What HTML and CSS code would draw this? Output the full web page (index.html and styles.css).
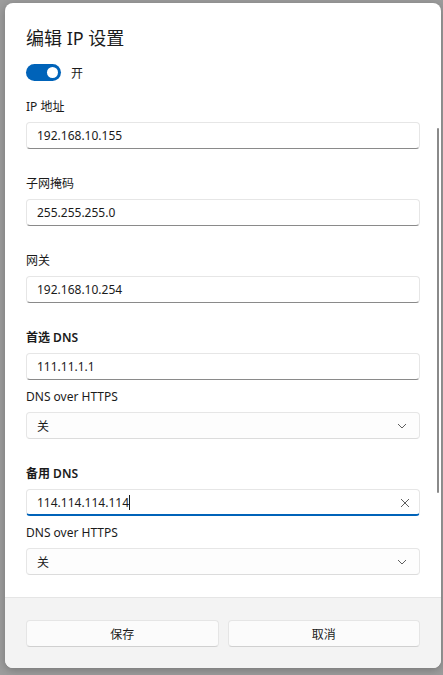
FILE: index.html
```html
<!DOCTYPE html>
<html lang="zh-CN">
<head>
  <meta charset="UTF-8" />
  <title>编辑 IP 设置</title>
  <link rel="stylesheet" href="styles.css">
</head>
<body>
  <div class="overlay">
    <div class="dialog">
      <div class="dialog-body">
        <h2>编辑 IP 设置</h2>

        <div class="toggle-row">
          <span class="toggle"><span class="thumb"></span></span>
          <span>开</span>
        </div>

        <div class="form-group">
          <label>IP 地址</label>
          <div class="field">192.168.10.155</div>
        </div>
        <div class="form-group">
          <label>子网掩码</label>
          <div class="field">255.255.255.0</div>
        </div>
        <div class="form-group">
          <label>网关</label>
          <div class="field">192.168.10.254</div>
        </div>
        <div class="form-group">
          <label class="strong">首选 DNS</label>
          <div class="field">111.11.1.1</div>
          <label class="sub">DNS over HTTPS</label>
          <div class="field select">
            <span>关</span>
            <svg width="10" height="6" viewBox="0 0 10 6"><polyline points="1,1 5,5 9,1" fill="none" stroke="#5f5f5f" stroke-width="1"/></svg>
          </div>
        </div>
        <div class="form-group">
          <label class="strong">备用 DNS</label>
          <div class="field focused">
            <span>114.114.114.114<span class="caret"></span></span>
            <svg width="10" height="10" viewBox="0 0 10 10"><path d="M1 1 L9 9 M9 1 L1 9" stroke="#5f5f5f" stroke-width="1"/></svg>
          </div>
          <label class="sub">DNS over HTTPS</label>
          <div class="field select">
            <span>关</span>
            <svg width="10" height="6" viewBox="0 0 10 6"><polyline points="1,1 5,5 9,1" fill="none" stroke="#5f5f5f" stroke-width="1"/></svg>
          </div>
        </div>
      </div>

      <div class="scroll-thumb"></div>

      <div class="dialog-footer">
        <button class="btn">保存</button>
        <button class="btn">取消</button>
      </div>
    </div>
  </div>
</body>
</html>
```

FILE: styles.css
```css
body {
  margin: 0;
  font-family: "Noto Sans", "Noto Sans CJK SC", sans-serif;
  font-size: 12px;
  color: #1b1b1b;
  background: #9d9d9d;
}
.overlay {
  padding: 3px 2px 7px 5px;
}
.dialog {
  position: relative;
  width: 436px;
  height: 665px;
  background: white;
  border-radius: 8px;
  box-shadow: 0 2px 10px rgba(0, 0, 0, 0.25);
  display: flex;
  flex-direction: column;
  overflow: hidden;
}
.dialog-body {
  flex: 1;
  overflow: hidden;
  padding: 23px 21px 0 21px;
}
h2 {
  margin: 0;
  font-size: 18px;
  font-weight: 400;
  line-height: 24px;
}

/* toggle switch */
.toggle-row {
  display: flex;
  align-items: center;
  gap: 10px;
  margin-top: 14px;
  height: 17px;
}
.toggle {
  width: 35px;
  height: 17px;
  border-radius: 9px;
  background: #0063b9;
  display: flex;
  align-items: center;
  justify-content: flex-end;
  padding-right: 3px;
  box-sizing: border-box;
}
.thumb {
  width: 11px;
  height: 11px;
  border-radius: 50%;
  background: white;
}

/* fields */
.form-group {
  margin-top: 25px;
}
.toggle-row + .form-group {
  margin-top: 16px;
}
label {
  display: block;
  line-height: 20px;
  margin-bottom: 5px;
}
label.strong {
  font-weight: 600;
}
label.sub {
  margin-top: 7px;
}
.field {
  height: 27px;
  box-sizing: border-box;
  border: 1px solid #e6e6e6;
  border-bottom-color: #8a8a8a;
  border-radius: 4px;
  padding: 0 10px;
  display: flex;
  align-items: center;
  justify-content: space-between;
  background: white;
}
.field.select {
  background: #fdfdfd;
  border-bottom-color: #dcdcdc;
  padding-right: 12px;
}
.field.focused {
  border-bottom: 2px solid #0063b9;
  padding-top: 1px;
  padding-right: 9px;
}
.caret {
  display: inline-block;
  width: 1px;
  height: 15px;
  background: #1b1b1b;
  vertical-align: -3px;
}

/* overlay scrollbar */
.scroll-thumb {
  position: absolute;
  top: 125px;
  right: 2px;
  width: 2px;
  height: 365px;
  border-radius: 1px;
  background: #8a8a8a;
}

/* footer */
.dialog-footer {
  height: 71px;
  box-sizing: border-box;
  background: #f3f3f3;
  border-top: 1px solid #e5e5e5;
  padding: 22px 21px 0 21px;
  display: grid;
  grid-template-columns: 1fr 1fr;
  gap: 9px;
  align-content: start;
}
.btn {
  height: 27px;
  font-family: inherit;
  font-size: 12px;
  color: #1b1b1b;
  background: #fbfbfb;
  border: 1px solid #e5e5e5;
  border-bottom-color: #d0d0d0;
  border-radius: 4px;
}
```
